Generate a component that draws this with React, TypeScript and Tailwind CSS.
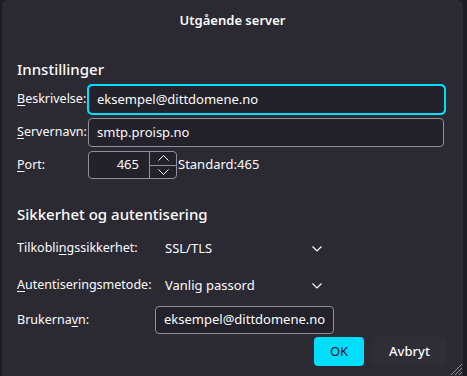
import React from 'react'

function Chevron() {
    return (
        <svg width="10" height="6" viewBox="0 0 10 6" fill="none" stroke="#fbfbfe" strokeWidth="1.2">
            <path d="M0.5 0.5 L5 5 L9.5 0.5" />
        </svg>
    )
}

function Key({ children }: { children: React.ReactNode }) {
    return <span className="underline underline-offset-2">{children}</span>
}

function SelectRow({ label, value }: { label: React.ReactNode; value: string }) {
    return (
        <div className="flex items-center h-[29px]">
            <div className="w-[138px] whitespace-nowrap text-[12.5px]">{label}</div>
            <div className="flex items-center w-[177px] h-[29px] pl-[10px] pr-[10px] justify-between">
                <span>{value}</span>
                <Chevron />
            </div>
        </div>
    )
}

export default function App() {
    return (
        <div
            className="w-[467px] h-[376px] bg-[#1c1b22] overflow-hidden text-[13px] text-[#fbfbfe]"
            style={{ fontFamily: '"Noto Sans", sans-serif' }}
        >
            <div className="relative ml-[2px] w-[461px] h-[376px] bg-[#2b2a33] rounded-t-[6px]">
                <div className="h-[42px] flex items-center justify-center font-semibold">
                    Utgående server
                </div>

                <div className="px-[15px]">
                    <h2 className="mt-[17px] h-[20px] leading-[20px] text-[15px] font-medium">Innstillinger</h2>

                    <div className="mt-[6px] flex flex-col gap-[4px]">
                        <div className="flex items-center">
                            <label className="w-[71px] whitespace-nowrap text-[12.5px]"><Key>B</Key>eskrivelse:</label>
                            <div className="w-[357px] h-[29px] rounded-[4px] bg-[#23222b] outline-2 outline-[#00ddff] -outline-offset-1 border border-[#00ddff] flex items-center px-[8px]">
                                eksempel@dittdomene.no
                            </div>
                        </div>
                        <div className="flex items-center">
                            <label className="w-[71px] whitespace-nowrap text-[12.5px]"><Key>S</Key>ervernavn:</label>
                            <div className="w-[356px] h-[29px] rounded-[4px] bg-[#23222b] border border-[#8f8f9d] flex items-center px-[8px]">
                                smtp.proisp.no
                            </div>
                        </div>
                        <div className="flex items-center">
                            <label className="w-[71px] whitespace-nowrap text-[12.5px]"><Key>P</Key>ort:</label>
                            <div className="w-[89px] h-[28px] rounded-[4px] bg-[#23222b] border border-[#8f8f9d] flex">
                                <div className="flex-1 flex items-center justify-end pr-[10px]">465</div>
                                <div className="w-[27px] h-full flex flex-col border-l border-[#8f8f9d]">
                                    <div className="flex-1 flex items-center justify-center border-b border-[#8f8f9d]">
                                        <svg width="11" height="6" viewBox="0 0 11 6" fill="none" stroke="#fbfbfe" strokeWidth="1">
                                            <path d="M0.5 5.5 L5.5 0.5 L10.5 5.5" />
                                        </svg>
                                    </div>
                                    <div className="flex-1 flex items-center justify-center">
                                        <svg width="11" height="6" viewBox="0 0 11 6" fill="none" stroke="#fbfbfe" strokeWidth="1">
                                            <path d="M0.5 0.5 L5.5 5.5 L10.5 0.5" />
                                        </svg>
                                    </div>
                                </div>
                            </div>
                            <span className="ml-[1px]">Standard:465</span>
                        </div>
                    </div>

                    <h2 className="mt-[25px] h-[20px] leading-[20px] text-[15px] font-medium">Sikkerhet og autentisering</h2>

                    <div className="mt-[10px] flex flex-col gap-[8px]">
                        <SelectRow label={<>Tilkobli<Key>n</Key>gssikkerhet:</>} value="SSL/TLS" />
                        <SelectRow label={<><Key>A</Key>utentiseringsmetode:</>} value="Vanlig passord" />
                        <div className="flex items-center mt-[-2px]">
                            <div className="w-[138px] text-[12.5px]">Brukerna<Key>v</Key>n:</div>
                            <div className="w-[179px] h-[28px] rounded-[4px] bg-[#23222b] border border-[#8f8f9d] flex items-center px-[8px]">
                                eksempel@dittdomene.no
                            </div>
                        </div>
                    </div>

                    <div className="mt-[3px] flex justify-end gap-[8px] pr-[1px]">
                        <button className="w-[50px] h-[29px] rounded-[4px] bg-[#00ddff] text-[#15141a]">OK</button>
                        <button className="w-[75px] h-[29px] rounded-[4px] bg-[#2f2e36] font-medium">Avbryt</button>
                    </div>
                </div>

                <svg className="absolute right-0 bottom-0" width="14" height="14" viewBox="0 0 14 14" stroke="#8f8f9d" strokeWidth="1">
                    <path d="M13 2 L2 13 M13 6 L6 13 M13 10 L10 13" />
                </svg>
            </div>
        </div>
    )
}
